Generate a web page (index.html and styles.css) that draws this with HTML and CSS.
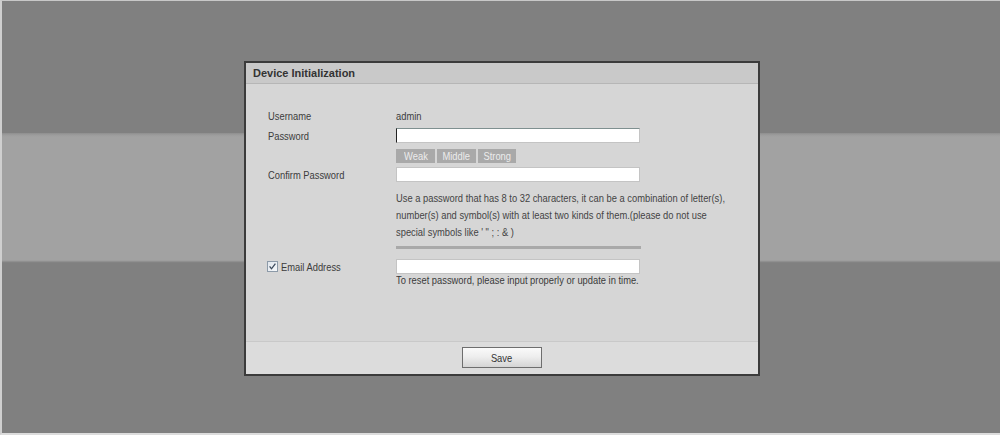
FILE: index.html
```html
<!DOCTYPE html>
<html>
<head>
<meta charset="utf-8">
<link rel="stylesheet" href="styles.css">
</head>
<body>
<div class="screen">
  <div class="dialog">
    <div class="dlg-head">Device Initialization</div>
    <div class="dlg-body">
      <div class="row r-user">
        <div class="label"><span class="sq">Username</span></div>
        <div class="value"><span class="sq">admin</span></div>
      </div>
      <div class="row r-pass">
        <div class="label"><span class="sq">Password</span></div>
        <input class="field field-focus" type="text" value="">
      </div>
      <div class="row r-strength">
        <div class="label"></div>
        <div class="strength">
          <span class="lvl"><span class="sqc">Weak</span></span>
          <span class="lvl"><span class="sqc">Middle</span></span>
          <span class="lvl"><span class="sqc">Strong</span></span>
        </div>
      </div>
      <div class="row r-confirm">
        <div class="label"><span class="sq">Confirm Password</span></div>
        <input class="field" type="text" value="">
      </div>
      <div class="row r-hint">
        <div class="label"></div>
        <div class="hint"><span class="sq">Use a password that has 8 to 32 characters, it can be a combination of letter(s),<br>number(s) and symbol(s) with at least two kinds of them.(please do not use<br>special symbols like ' " ; : &amp; )</span></div>
      </div>
      <div class="row r-sep">
        <div class="label"></div>
        <div class="sep"></div>
      </div>
      <div class="row r-email">
        <div class="label email-label">
          <svg class="chk" width="11" height="11" viewBox="0 0 11 11">
            <defs>
              <linearGradient id="cg" x1="0" y1="0" x2="1" y2="1">
                <stop offset="0" stop-color="#dfe5ec"/>
                <stop offset="1" stop-color="#f7f9fb"/>
              </linearGradient>
            </defs>
            <rect x="0.5" y="0.5" width="10" height="10" fill="url(#cg)" stroke="#8c9aa8"/>
            <path d="M2.6 5.4 L4.5 7.8 L8.4 2.6" fill="none" stroke="#3c4a5c" stroke-width="1.3"/>
          </svg>
          <span class="sq">Email Address</span>
        </div>
        <input class="field" type="text" value="">
      </div>
      <div class="row r-ehint">
        <div class="label"></div>
        <div class="ehint"><span class="sq">To reset password, please input properly or update in time.</span></div>
      </div>
    </div>
    <div class="dlg-foot">
      <button class="btn" type="button"><span class="sqc">Save</span></button>
    </div>
  </div>
</div>
</body>
</html>
```
FILE: styles.css
```css
html, body {
  margin: 0;
  padding: 0;
}
body {
  font-family: "Liberation Sans", Arial, sans-serif;
  font-size: 11px;
  color: #3c3c3c;
}
.sq {
  display: inline-block;
  white-space: nowrap;
  transform: scaleX(0.85);
  transform-origin: left center;
}
.sqc {
  display: inline-block;
  white-space: nowrap;
  transform: scaleX(0.85);
  transform-origin: center center;
}
.screen {
  box-sizing: border-box;
  width: 1000px;
  height: 435px;
  border-top: 1px solid #c8c8c8;
  border-left: 2px solid #cfcfcf;
  border-bottom: 2px solid #dcdcdc;
  background: linear-gradient(to bottom,
    #808080 0, #808080 132px,
    #8e8e8e 132px, #9c9c9c 134px,
    #a2a2a2 136px, #a2a2a2 259px,
    #9a9a9a 260px, #868686 261px,
    #808080 262px, #808080 100%);
  padding-top: 60px;
  padding-left: 242px;
}
.dialog {
  box-sizing: border-box;
  width: 516px;
  height: 315px;
  border: 2px solid #3b3b3b;
  background: #d6d6d6;
  display: flex;
  flex-direction: column;
}
.dlg-head {
  height: 20px;
  line-height: 20px;
  background: #c9c9c9;
  border-bottom: 1px solid #b6b6b6;
  padding-left: 7px;
  font-weight: bold;
  font-size: 11px;
  color: #333;
}
.dlg-body {
  height: 257px;
  box-sizing: border-box;
  padding: 24px 0 0 22px;
  display: flex;
  flex-direction: column;
}
.row {
  display: flex;
  align-items: center;
}
.label {
  width: 128px;
  flex: none;
}
.r-user { height: 15px; }
.r-pass { margin-top: 5px; }
.r-strength { margin-top: 6px; }
.r-confirm { margin-top: 4px; }
.r-hint { margin-top: 8px; align-items: flex-start; }
.r-sep { margin-top: 5px; }
.r-email { margin-top: 10px; }
.r-ehint { margin-top: 0; }

.field {
  box-sizing: border-box;
  width: 244px;
  height: 15px;
  margin: 0;
  padding: 0;
  border: 1px solid #c4c4c4;
  background: #fff;
  outline: none;
  font: inherit;
}
.field-focus {
  border-top-color: #7f9090;
  border-left-color: #222;
}
.strength {
  display: flex;
  gap: 2px;
}
.lvl {
  width: 39px;
  height: 14px;
  line-height: 14px;
  text-align: center;
  background: #a9a9a9;
  color: #ececec;
}
.lvl:last-child { width: 38px; }
.hint {
  width: 340px;
  line-height: 17px;
  color: #444;
}
.sep {
  width: 245px;
  height: 3px;
  background: #a9a9a9;
}
.email-label {
  display: flex;
  align-items: center;
  gap: 3px;
}
.email-label .chk {
  display: block;
  margin-left: -1px;
}
.ehint {
  line-height: 12px;
  color: #3a3a3a;
}
.dlg-foot {
  flex: 1;
  border-top: 1px solid #c9c9c9;
  background: #dcdcdc;
  display: flex;
  justify-content: center;
  padding-top: 5px;
  box-sizing: border-box;
}
.btn {
  box-sizing: border-box;
  width: 80px;
  height: 21px;
  margin: 0;
  padding: 0;
  border: 1px solid #6e6e6e;
  background: linear-gradient(to bottom, #fafafa 0%, #eeeeee 45%, #d4d4d4 100%);
  font: inherit;
  color: #333;
}
```
